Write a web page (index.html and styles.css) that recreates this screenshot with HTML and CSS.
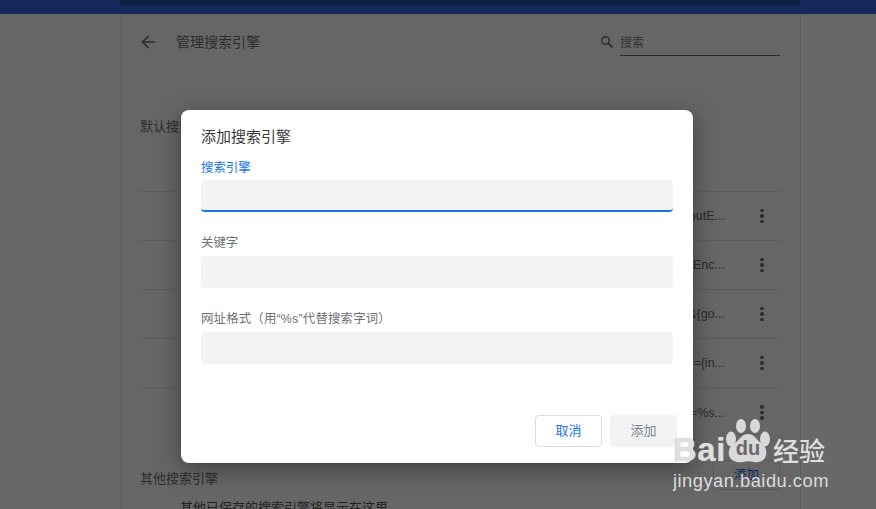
FILE: index.html
```html
<!DOCTYPE html>
<html lang="zh-CN">
<head>
<meta charset="utf-8">
<title>管理搜索引擎</title>
<link rel="stylesheet" href="styles.css">
</head>
<body>
<div class="app">
  <header class="topbar"><div class="topbar-inner"></div></header>
  <div class="columns">
    <aside class="side"></aside>
    <main class="main">
      <div class="head">
        <svg class="back" viewBox="0 0 16 16" width="16" height="16"><path d="M15 8H2.5M8.5 2 2.5 8l6 6" fill="none" stroke="#2c2c2c" stroke-width="1.6"/></svg>
        <h1 class="page-title">管理搜索引擎</h1>
        <svg class="search-icon" viewBox="0 0 14 14" width="14" height="14"><circle cx="5.5" cy="5.5" r="3.8" fill="none" stroke="#2e2e2e" stroke-width="1.4"/><path d="M8.4 8.4 12.6 12.6" stroke="#2e2e2e" stroke-width="1.7"/></svg>
        <div class="search-box">搜索</div>
      </div>
      <h2 class="section-title default-title">默认搜索引擎</h2>
      <div class="sub-label">搜索引擎</div>
      <div class="rows">
        <div class="row"><span class="url">outE...</span><span class="dots"><i></i><i></i><i></i></span></div>
        <div class="row"><span class="url">tEnc...</span><span class="dots"><i></i><i></i><i></i></span></div>
        <div class="row"><span class="url">&amp;{go...</span><span class="dots"><i></i><i></i><i></i></span></div>
        <div class="row"><span class="url">={in...</span><span class="dots"><i></i><i></i><i></i></span></div>
        <div class="row"><span class="url">=%s...</span><span class="dots"><i></i><i></i><i></i></span></div>
      </div>
      <div class="other-head">
        <h2 class="section-title">其他搜索引擎</h2>
        <button class="bg-add" type="button">添加</button>
      </div>
      <p class="other-text">其他已保存的搜索引擎将显示在这里</p>
    </main>
    <aside class="side"></aside>
  </div>
</div>

<section class="dialog">
  <h2 class="dialog-title">添加搜索引擎</h2>
  <label class="field-label active">搜索引擎</label>
  <div class="field focused"></div>
  <label class="field-label">关键字</label>
  <div class="field"></div>
  <label class="field-label wide">网址格式（用“%s”代替搜索字词）</label>
  <div class="field"></div>
  <div class="actions">
    <button class="btn cancel" type="button">取消</button>
    <button class="btn add" type="button">添加</button>
  </div>
</section>

<div class="watermark">
  <div class="wm-logo">
    <span class="wm-bai">Bai</span>
    <span class="wm-paw">
      <svg viewBox="0 0 44 46" width="44" height="46"><g fill="#d9d9d9"><ellipse cx="15" cy="8" rx="5" ry="7"/><ellipse cx="29" cy="8" rx="5" ry="7"/><ellipse cx="5" cy="21" rx="5" ry="7.5"/><ellipse cx="39" cy="21" rx="5" ry="7.5"/><path d="M22 16c6 0 8 5 13 9 5 3 6 8 5 12-1 6-7 8-12 7-4-1-7-1-11 0-6 1-13-1-14-7-1-5 1-9 6-12 5-4 7-9 13-9z"/></g></svg>
      <span class="wm-du">du</span>
    </span>
    <span class="wm-cn">经验</span>
  </div>
  <div class="wm-url">jingyan.baidu.com</div>
</div>
</body>
</html>
```
FILE: styles.css
```css
* { box-sizing: border-box; }
html, body { margin: 0; height: 509px; overflow: hidden; }
body {
  position: relative;
  background: #676867;
  font-family: "Liberation Sans", "Noto Sans CJK SC", sans-serif;
  color: #2b2b2b;
}
.app { height: 509px; display: flex; flex-direction: column; }
.topbar { height: 14px; flex: none; background: #142a5a; padding: 0 76px 0 120px; }
.topbar-inner { height: 6px; background: #0f2046; }
.columns { flex: 1; display: flex; min-height: 0; }
.side { width: 120px; flex: none; }
.side:last-child { flex: 1; }
.main {
  width: 681px;
  flex: none;
  background: #666;
  border-left: 1px solid #5c5c5c;
  border-right: 1px solid #5c5c5c;
  padding: 14px 20px 0 19px;
  overflow: hidden;
}
.head { display: flex; align-items: center; height: 28px; }
.back { flex: none; }
.page-title { margin: 0 0 2px 20px; font-size: 14px; font-weight: 400; color: #2d2d2d; flex: 1; }
.search-icon { flex: none; margin-right: 6px; }
.search-box {
  width: 160px; height: 27px; margin-top: 1px; padding-top: 3px; font-size: 12px; line-height: 22px;
  color: #333; border-bottom: 1px solid #2a2a2a;
}
.section-title { margin: 0; font-size: 13px; font-weight: 400; color: #2d2d2d; line-height: 20px; }
.default-title { margin-top: 61px; }
.sub-label { margin: 24px 0 0 41px; font-size: 12px; line-height: 18px; }
.rows { margin-top: 12px; border-top: 1px solid #5d5d5d; }
.row { height: 49px; display: flex; align-items: center; justify-content: flex-end; border-bottom: 1px solid #5d5d5d; }
.row:last-child { border-bottom: 0; }
.url { font-size: 12.5px; color: #2b2b2b; margin-right: 29px; font-family: "Liberation Sans", sans-serif; }
.dots { width: 16px; display: flex; flex-direction: column; align-items: center; gap: 2px; margin-right: 10px; }
.dots i { width: 3.6px; height: 3.6px; border-radius: 50%; background: #2e2e2e; }
.other-head { margin-top: 27px; display: flex; justify-content: space-between; align-items: center; height: 30px; }
.bg-add {
  width: 67px; height: 30px; padding: 0 0 3px; margin-top: -8px; background: transparent; border: 1px solid #5a5a5a; border-radius: 4px;
  font: 12.5px "Liberation Sans", "Noto Sans CJK SC", sans-serif; color: #10265c;
}
.other-text { margin: 4px 0 0 40px; font-size: 13px; line-height: 20px; color: #222; }

.dialog {
  position: absolute;
  left: 181px; top: 110px;
  width: 512px; height: 353px;
  padding: 16px 20px 0;
  background: #fff;
  border-radius: 8px;
  box-shadow: 0 6px 24px rgba(0,0,0,.38);
}
.dialog-title { margin: 0 0 11px; font-size: 15px; font-weight: 400; line-height: 22px; color: #3a3a3a; }
.field-label { display: block; height: 22px; font-size: 12.4px; line-height: 18px; color: #6e7074; }
.field-label.active { height: 21px; color: #1a73e8; }
.field-label.wide { letter-spacing: .2px; }
.field { height: 32px; margin-bottom: 22px; background: #f1f3f4; border-radius: 4px; }
.field.focused { border-bottom: 2px solid #1a73e8; }
.actions { display: flex; gap: 8px; margin: 51px -4px 0 0; justify-content: flex-end; }
.btn { width: 67px; height: 32px; padding: 0 0 3px; border-radius: 4px; font: 13px "Liberation Sans", "Noto Sans CJK SC", sans-serif; }
.cancel { background: #fff; border: 1px solid #dadce0; color: #1a73e8; }
.add { background: #f1f3f4; border: 0; color: #80868b; }

.watermark { position: absolute; left: 673px; top: 415px; width: 160px; color: #dedede; }
.wm-logo { display: flex; align-items: flex-end; height: 50px; }
.wm-bai { font: 700 33px/30px "Liberation Sans", sans-serif; letter-spacing: .5px; width: 53px; color: rgba(236,236,236,.82); text-shadow: 0 0 1px #aaa; }
.wm-paw { position: relative; width: 44px; height: 46px; flex: none; margin-bottom: 1px; }
.wm-paw svg { display: block; }
.wm-du { position: absolute; left: 6px; bottom: 4px; width: 32px; text-align: center; font: 700 20px/24px "Liberation Sans", sans-serif; color: #696969; }
.wm-cn { font: 500 26px/30px "Noto Sans CJK SC", sans-serif; margin-left: 3px; white-space: nowrap; }
.wm-url { margin-top: 3px; font: 400 18.3px/26px "Liberation Sans", sans-serif; letter-spacing: .5px; white-space: nowrap; color: #dcdcdc; }
```
